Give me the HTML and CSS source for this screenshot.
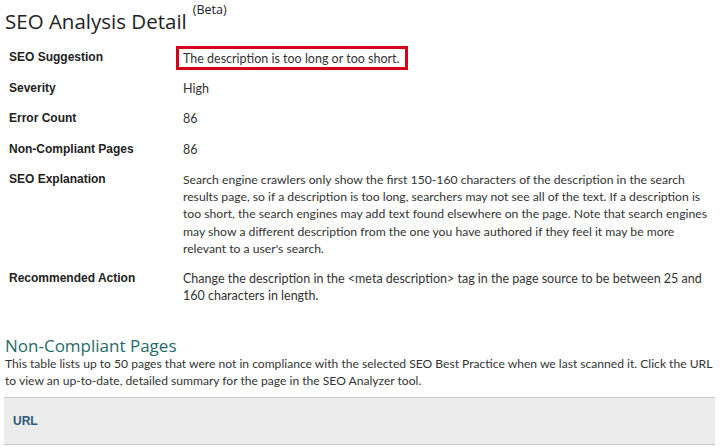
FILE: index.html
```html
<!DOCTYPE html>
<html>
<head>
<meta charset="utf-8">
<link rel="stylesheet" href="styles.css">
</head>
<body>
<div class="page">
  <h1 class="title">SEO Analysis Detail<sup class="beta">(Beta)</sup></h1>
  <dl class="details">
    <div class="row"><dt>SEO Suggestion</dt><dd><span class="highlight">The description is too long or too short.</span></dd></div>
    <div class="row"><dt>Severity</dt><dd>High</dd></div>
    <div class="row"><dt>Error Count</dt><dd>86</dd></div>
    <div class="row"><dt>Non-Compliant Pages</dt><dd>86</dd></div>
    <div class="row"><dt>SEO Explanation</dt><dd class="explain">Search engine crawlers only show the first 150-160 characters of the description in the search<br>results page, so if a description is too long, searchers may not see all of the text. If a description is<br>too short, the search engines may add text found elsewhere on the page. Note that search engines<br>may show a different description from the one you have authored if they feel it may be more<br>relevant to a user's search.</dd></div>
    <div class="row"><dt>Recommended Action</dt><dd>Change the description in the &lt;meta description&gt; tag in the page source to be between 25 and 160 characters in length.</dd></div>
  </dl>
  <h2 class="section">Non-Compliant Pages</h2>
  <p class="intro">This table lists up to 50 pages that were not in compliance with the selected SEO Best Practice when we last scanned it. Click the URL to view an up-to-date, detailed summary for the page in the SEO Analyzer tool.</p>
  <table class="pages">
    <thead><tr><th>URL</th></tr></thead>
  </table>
</div>
</body>
</html>
```
FILE: styles.css
```css
body {
  margin: 0;
  background: #fff;
  color: #333;
  font-family: Lato, "Liberation Sans", Arial, sans-serif;
}
.page {
  padding: 0 5px;
}
.title {
  font-family: "Open Sans", sans-serif;
  font-weight: 400;
  font-size: 20.5px;
  line-height: 30px;
  margin: 0;
  padding-top: 6px;
  color: #222;
}
.beta {
  font-size: 12.5px;
  line-height: 0;
  vertical-align: 15px;
  margin-left: 6px;
}
.details {
  margin: 6.8px 0 0;
  padding-left: 4px;
}
.row {
  display: grid;
  grid-template-columns: 174px 1fr;
  padding: 6.6px 0;
  line-height: 17.2px;
}
.row dt {
  font-family: "Liberation Sans", Arial, sans-serif;
  font-weight: 700;
  font-size: 12px;
  color: #222;
}
.row dd {
  margin: 0;
  font-size: 12.5px;
  color: #333;
}
.row .explain {
  font-size: 12.2px;
}
.highlight {
  border: 3px solid #d6001c;
  padding: 1.5px 6px 1.5px 4px;
  margin-left: -7px;
}
.section {
  font-family: "Open Sans", sans-serif;
  font-weight: 400;
  font-size: 17px;
  line-height: 19.5px;
  margin: 24.8px 0 0;
  color: #1f6b68;
}
.intro {
  font-size: 12.1px;
  line-height: 17px;
  margin: 0;
  color: #333;
}
.pages {
  margin: 7.5px 0 0 -1px;
  width: calc(100% + 1px);
  border-collapse: collapse;
}
.pages th {
  background: #ececec;
  border-top: 1px solid #c8c8c8;
  border-bottom: 1px solid #c8c8c8;
  text-align: left;
  padding: 15px 9px 14px;
  font-family: "Liberation Sans", Arial, sans-serif;
  font-weight: 700;
  font-size: 12px;
  line-height: 17px;
  color: #2d5b7c;
}
```
